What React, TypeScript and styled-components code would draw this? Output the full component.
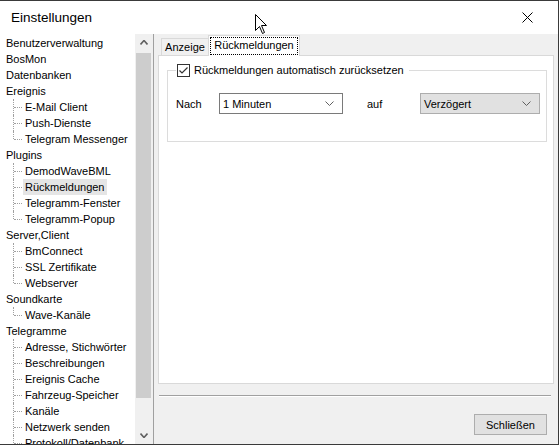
import React from 'react';
import styled, { createGlobalStyle } from 'styled-components';

const Global = createGlobalStyle`
  html, body { margin: 0; padding: 0; background: #ffffff; }
  body { font-family: "Liberation Sans", Arial, sans-serif; font-size: 11px; color: #000; }
  * { box-sizing: border-box; }
`;

const Window = styled.div`
  position: relative;
  width: 559px;
  height: 445px;
  display: flex;
  flex-direction: column;
  background: #f0f0f0;
  border-top: 1px solid #3a3a3a;
  border-right: 1px solid #3a3a3a;
  border-bottom: 1px solid #3a3a3a;
  overflow: hidden;
`;

const TitleBar = styled.div`
  flex: none;
  height: 33px;
  background: #ffffff;
  display: flex;
  align-items: center;
  justify-content: space-between;
  padding: 0 25px 0 11px;
`;

const Title = styled.span`
  font-size: 13.5px;
  color: #000;
`;

const Body = styled.div`
  flex: 1;
  display: flex;
  min-height: 0;
`;

const Tree = styled.div`
  width: 135px;
  flex: none;
  background: #ffffff;
  padding-top: 1px;
  overflow: hidden;
`;

const Row = styled.div<{ $child?: boolean; $last?: boolean }>`
  position: relative;
  height: 16px;
  line-height: 16px;
  white-space: nowrap;
  padding-left: ${(p) => (p.$child ? '23px' : '4px')};

  ${(p) =>
    p.$child
      ? `
    &::before {
      content: '';
      position: absolute;
      left: 13px;
      top: 0;
      height: ${p.$last ? '8px' : '16px'};
      border-left: 1px dotted #a0a0a0;
    }
    &::after {
      content: '';
      position: absolute;
      left: 14px;
      top: 8px;
      width: 8px;
      border-top: 1px dotted #a0a0a0;
    }
  `
      : ''}
`;

const Label = styled.span<{ $selected?: boolean }>`
  display: inline-block;
  padding: 0 2px;
  background: ${(p) => (p.$selected ? '#e5e5e5' : 'transparent')};
`;

const ScrollBar = styled.div`
  width: 17px;
  flex: none;
  display: flex;
  flex-direction: column;
  background: #f0f0f0;
`;

const ScrollButton = styled.div`
  height: 17px;
  flex: none;
  display: flex;
  align-items: center;
  justify-content: center;
`;

const Track = styled.div`
  flex: 1;
  padding: 2px 1px 0 1px;
`;

const Thumb = styled.div`
  height: 345px;
  background: #cdcdcd;
`;

const Splitter = styled.div`
  width: 2px;
  flex: none;
  margin-left: 1px;
  border-left: 1px solid #a0a0a0;
`;

const RightPane = styled.div`
  flex: 1;
  display: flex;
  flex-direction: column;
  padding: 1px 4px 0 3px;
  min-width: 0;
`;

const TabStrip = styled.div`
  height: 20px;
  flex: none;
  display: flex;
  align-items: flex-end;
  padding-left: 3px;
`;

const Tab = styled.div<{ $active?: boolean }>`
  position: relative;
  z-index: ${(p) => (p.$active ? 2 : 1)};
  width: ${(p) => (p.$active ? '92px' : '48px')};
  height: ${(p) => (p.$active ? '21px' : '17px')};
  margin-bottom: ${(p) => (p.$active ? '-1px' : '0')};
  margin-left: ${(p) => (p.$active ? '-1px' : '0')};
  background: ${(p) => (p.$active ? '#ffffff' : '#f0f0f0')};
  border: 1px solid #d9d9d9;
  border-bottom: none;
  padding: ${(p) => (p.$active ? '1px' : '0')};
  display: flex;
  align-items: ${(p) => (p.$active ? 'stretch' : 'center')};
  justify-content: center;
`;

const FocusRect = styled.span`
  flex: 1;
  display: flex;
  align-items: center;
  justify-content: center;
  border: 1px dotted #000;
  padding-bottom: 2px;
`;

const Panel = styled.div`
  flex: 1;
  background: #ffffff;
  border: 1px solid #d9d9d9;
  display: flex;
  flex-direction: column;
`;

const Group = styled.fieldset`
  margin: 7px 6px 0 8px;
  min-width: 0;
  border: 1px solid #dcdcdc;
  padding: 16px 6px 27px 8px;
`;

const Legend = styled.legend`
  padding: 0 5px 0 1px;
  display: flex;
  align-items: center;
  gap: 4px;
  height: 14px;
`;

const CheckBox = styled.span`
  width: 13px;
  height: 13px;
  border: 1px solid #333333;
  background: #ffffff;
  display: flex;
  align-items: center;
  justify-content: center;
`;

const FieldRow = styled.div`
  display: flex;
  align-items: center;
  height: 21px;
`;

const FieldLabel = styled.span<{ $w: number; $ml?: number }>`
  width: ${(p) => p.$w}px;
  margin-left: ${(p) => p.$ml ?? 0}px;
  flex: none;
`;

const Combo = styled.div<{ $w: number; $flat?: boolean }>`
  width: ${(p) => p.$w}px;
  height: 21px;
  flex: none;
  display: flex;
  align-items: center;
  justify-content: space-between;
  padding: 0 8px 0 3px;
  background: ${(p) => (p.$flat ? '#e1e1e1' : '#ffffff')};
  border: 1px solid ${(p) => (p.$flat ? '#adadad' : '#7a7a7a')};
`;

const Footer = styled.div`
  height: 60px;
  flex: none;
  display: flex;
  flex-direction: column;
`;

const Separator = styled.div`
  margin: 11px 3px 0 1px;
  height: 2px;
  border-top: 1px solid #a0a0a0;
  border-bottom: 1px solid #ffffff;
`;

const ButtonRow = styled.div`
  display: flex;
  justify-content: flex-end;
  padding: 17px 7px 0 0;
`;

const Button = styled.button`
  width: 73px;
  height: 21px;
  font-family: inherit;
  font-size: 11px;
  color: #000;
  background: #e1e1e1;
  border: 1px solid #adadad;
  padding: 0;
  margin: 0;
`;

const Cursor = styled.svg`
  position: absolute;
  left: 255px;
  top: 13px;
  z-index: 10;
`;

const Chevron = ({ up, color = '#606060', w = 8 }: { up?: boolean; color?: string; w?: number }) => (
  <svg width={w + 1} height={5} viewBox={`0 0 ${w + 1} 5`}>
    <polyline
      points={up ? `0.5,4.5 ${(w + 1) / 2},0.5 ${w + 0.5},4.5` : `0.5,0.5 ${(w + 1) / 2},4.5 ${w + 0.5},0.5`}
      fill="none"
      stroke={color}
      strokeWidth={up !== undefined ? 1.6 : 1}
    />
  </svg>
);

type Item = { text: string; child?: boolean; last?: boolean; selected?: boolean };

const items: Item[] = [
  { text: 'Benutzerverwaltung' },
  { text: 'BosMon' },
  { text: 'Datenbanken' },
  { text: 'Ereignis' },
  { text: 'E-Mail Client', child: true },
  { text: 'Push-Dienste', child: true },
  { text: 'Telegram Messenger', child: true, last: true },
  { text: 'Plugins' },
  { text: 'DemodWaveBML', child: true },
  { text: 'Rückmeldungen', child: true, selected: true },
  { text: 'Telegramm-Fenster', child: true },
  { text: 'Telegramm-Popup', child: true, last: true },
  { text: 'Server,Client' },
  { text: 'BmConnect', child: true },
  { text: 'SSL Zertifikate', child: true },
  { text: 'Webserver', child: true, last: true },
  { text: 'Soundkarte' },
  { text: 'Wave-Kanäle', child: true, last: true },
  { text: 'Telegramme' },
  { text: 'Adresse, Stichwörter', child: true },
  { text: 'Beschreibungen', child: true },
  { text: 'Ereignis Cache', child: true },
  { text: 'Fahrzeug-Speicher', child: true },
  { text: 'Kanäle', child: true },
  { text: 'Netzwerk senden', child: true },
  { text: 'Protokoll/Datenbank', child: true },
];

export default function App() {
  return (
    <>
      <Global />
      <Window>
        <TitleBar>
          <Title>Einstellungen</Title>
          <svg width="11" height="11" viewBox="0 0 11 11">
            <path d="M0.5 0.5 L10.5 10.5 M10.5 0.5 L0.5 10.5" stroke="#000" strokeWidth="1" />
          </svg>
        </TitleBar>
        <Body>
          <Tree>
            {items.map((it) => (
              <Row key={it.text} $child={it.child} $last={it.last}>
                <Label $selected={it.selected}>{it.text}</Label>
              </Row>
            ))}
          </Tree>
          <ScrollBar>
            <ScrollButton>
              <Chevron up w={7} />
            </ScrollButton>
            <Track>
              <Thumb />
            </Track>
            <ScrollButton>
              <Chevron up={false} w={7} />
            </ScrollButton>
          </ScrollBar>
          <Splitter />
          <RightPane>
            <TabStrip>
              <Tab>Anzeige</Tab>
              <Tab $active>
                <FocusRect>Rückmeldungen</FocusRect>
              </Tab>
            </TabStrip>
            <Panel>
              <Group>
                <Legend>
                  <CheckBox>
                    <svg width="11" height="11" viewBox="0 0 11 11">
                      <polyline points="1.5,5.5 4,8 9.5,2.5" fill="none" stroke="#333" strokeWidth="1.2" />
                    </svg>
                  </CheckBox>
                  <span>Rückmeldungen automatisch zurücksetzen</span>
                </Legend>
                <FieldRow>
                  <FieldLabel $w={43}>Nach</FieldLabel>
                  <Combo $w={124}>
                    <span>1 Minuten</span>
                    <Chevron />
                  </Combo>
                  <FieldLabel $w={53} $ml={24}>auf</FieldLabel>
                  <Combo $w={120} $flat>
                    <span>Verzögert</span>
                    <Chevron />
                  </Combo>
                </FieldRow>
              </Group>
            </Panel>
            <Footer>
              <Separator />
              <ButtonRow>
                <Button>Schließen</Button>
              </ButtonRow>
            </Footer>
          </RightPane>
        </Body>
        <Cursor width="13" height="21" viewBox="0 0 13 21">
          <path d="M0.5 0.5 L0.5 16.5 L4.5 12.5 L7.5 19.5 L9.5 18.5 L6.5 11.5 L11.5 11.5 Z" fill="#fff" stroke="#000" strokeWidth="1" />
        </Cursor>
      </Window>
    </>
  );
}
